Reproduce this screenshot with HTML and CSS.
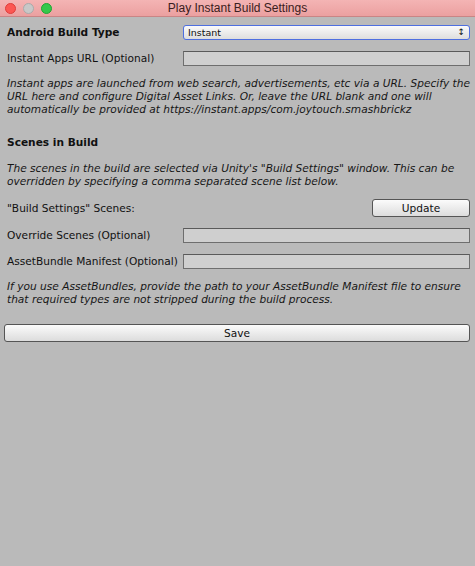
FILE: index.html
```html
<!DOCTYPE html>
<html>
<head>
<meta charset="utf-8">
<link rel="stylesheet" href="styles.css">
</head>
<body>
<div class="window">
  <div class="titlebar">
    <div class="lights">
      <span class="light red"></span>
      <span class="light grey"></span>
      <span class="light green"></span>
    </div>
    <div class="title">Play Instant Build Settings</div>
  </div>
  <div class="content">
    <div class="row r-build">
      <div class="label bold">Android Build Type</div>
      <div class="select"><span>Instant</span><span class="arrows">&#8597;</span></div>
    </div>
    <div class="row r-url">
      <div class="label">Instant Apps URL (Optional)</div>
      <div class="field"></div>
    </div>
    <p class="help p1">Instant apps are launched from web search, advertisements, etc via a URL. Specify the URL here and configure Digital Asset Links. Or, leave the URL blank and one will automatically be provided at https://instant.apps/com.joytouch.smashbrickz</p>
    <div class="heading">Scenes in Build</div>
    <p class="help p2">The scenes in the build are selected via Unity's "Build Settings" window. This can be overridden by specifying a comma separated scene list below.</p>
    <div class="row r-scenes">
      <div class="label">"Build Settings" Scenes:</div>
      <div class="button update">Update</div>
    </div>
    <div class="row r-override">
      <div class="label">Override Scenes (Optional)</div>
      <div class="field"></div>
    </div>
    <div class="row r-manifest">
      <div class="label">AssetBundle Manifest (Optional)</div>
      <div class="field"></div>
    </div>
    <p class="help p3">If you use AssetBundles, provide the path to your AssetBundle Manifest file to ensure that required types are not stripped during the build process.</p>
    <div class="button save">Save</div>
  </div>
</div>
</body>
</html>
```

FILE: styles.css
```css
html, body {
  margin: 0;
  padding: 0;
}
body {
  width: 475px;
  height: 566px;
  background: #bababa;
  font-family: "DejaVu Sans", sans-serif;
  font-size: 10.6px;
  color: #111;
  overflow: hidden;
}
.window {
  display: flex;
  flex-direction: column;
  height: 566px;
}
.titlebar {
  height: 16px;
  background: linear-gradient(#f4b4b4, #eba0a0);
  border-bottom: 1px solid #c98585;
  display: flex;
  align-items: center;
  position: relative;
}
.lights {
  display: flex;
  gap: 7px;
  padding-left: 5px;
}
.light {
  width: 11px;
  height: 11px;
  box-sizing: border-box;
  border-radius: 50%;
  display: block;
}
.red { background: #fc5753; border: 0.5px solid #df3e3b; }
.grey { background: #c8c8c8; border: 0.5px solid #aaa; }
.green { background: #34c84a; border: 0.5px solid #20a534; }
.title {
  position: absolute;
  left: 0;
  right: 0;
  top: 0;
  height: 16px;
  line-height: 16px;
  text-align: center;
  font-family: "Liberation Sans", Arial, sans-serif;
  font-size: 12px;
  color: #3a2020;
}
.content {
  padding: 7px 5px 0 7px;
  display: flex;
  flex-direction: column;
}
.row {
  display: flex;
  align-items: center;
}
.label {
  width: 176px;
  flex: none;
  white-space: nowrap;
}
.bold { font-weight: bold; }
.select {
  flex: 1;
  height: 13px;
  border: 1.5px solid #4e6fe0;
  border-radius: 3px;
  background: linear-gradient(#fafafa, #dedede);
  display: flex;
  align-items: center;
  justify-content: space-between;
  padding: 0 4px 0 4px;
  font-size: 9.5px;
}
.arrows { font-size: 9px; }
.field {
  flex: 1;
  height: 13px;
  border: 1px solid #6e6e6e;
  border-top-color: #5a5a5a;
  background: #cfcfcf;
}
.r-build { height: 16px; }
.r-url { margin-top: 10px; height: 16px; }
.help {
  margin: 0 -3px 0 0;
  font-style: italic;
  line-height: 13px;
  color: #161616;
}
.p1 { margin-top: 11px; }
.heading {
  font-weight: bold;
  margin-top: 20px;
  line-height: 13px;
}
.p2 { margin-top: 13px; }
.r-scenes { margin-top: 10px; height: 19px; justify-content: space-between; }
.button {
  border: 1px solid #555;
  border-radius: 3px;
  background: linear-gradient(#fbfbfb, #dcdcdc);
  text-align: center;
  box-sizing: border-box;
}
.update {
  width: 98px;
  height: 18px;
  line-height: 16px;
  margin-right: 0;
}
.r-override { margin-top: 10px; height: 16px; }
.r-manifest { margin-top: 10px; height: 16px; }
.p3 { margin-top: 11px; }
.save {
  margin-top: 18px;
  margin-left: -3px;
  height: 18px;
  line-height: 16px;
}
```
